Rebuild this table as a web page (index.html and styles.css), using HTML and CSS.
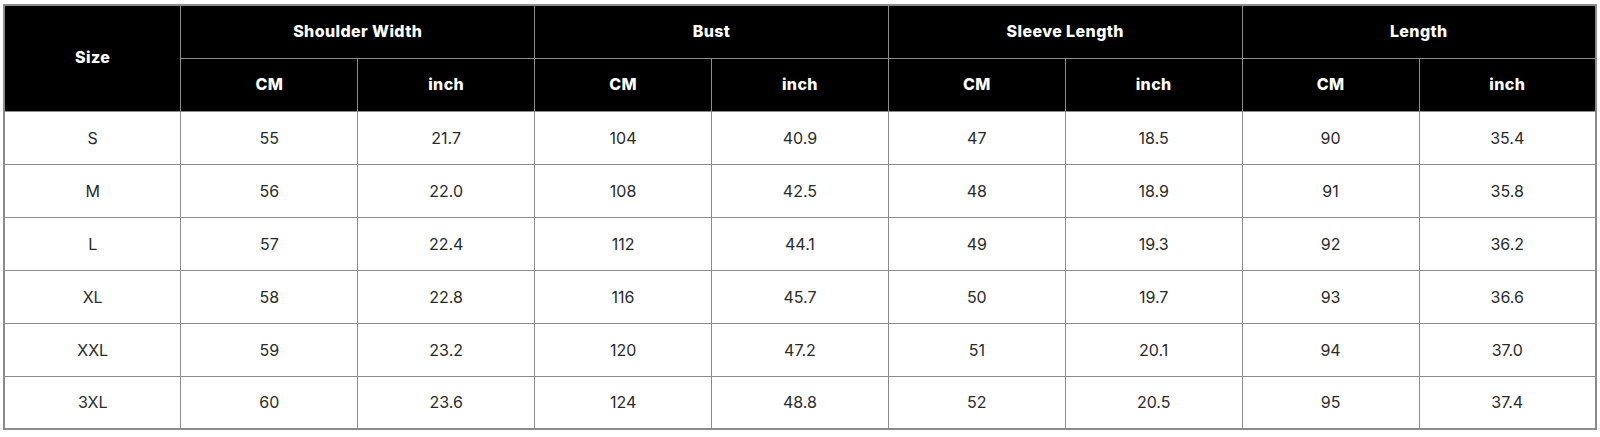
FILE: index.html
```html
<!DOCTYPE html>
<html>
<head>
<meta charset="utf-8">
<link rel="stylesheet" href="styles.css">
</head>
<body>
<table class="size-table">
  <thead>
    <tr>
      <th rowspan="2">Size</th>
      <th colspan="2">Shoulder Width</th>
      <th colspan="2">Bust</th>
      <th colspan="2">Sleeve Length</th>
      <th colspan="2">Length</th>
    </tr>
    <tr>
      <th>CM</th><th>inch</th>
      <th>CM</th><th>inch</th>
      <th>CM</th><th>inch</th>
      <th>CM</th><th>inch</th>
    </tr>
  </thead>
  <tbody>
    <tr><td>S</td><td>55</td><td>21.7</td><td>104</td><td>40.9</td><td>47</td><td>18.5</td><td>90</td><td>35.4</td></tr>
    <tr><td>M</td><td>56</td><td>22.0</td><td>108</td><td>42.5</td><td>48</td><td>18.9</td><td>91</td><td>35.8</td></tr>
    <tr><td>L</td><td>57</td><td>22.4</td><td>112</td><td>44.1</td><td>49</td><td>19.3</td><td>92</td><td>36.2</td></tr>
    <tr><td>XL</td><td>58</td><td>22.8</td><td>116</td><td>45.7</td><td>50</td><td>19.7</td><td>93</td><td>36.6</td></tr>
    <tr><td>XXL</td><td>59</td><td>23.2</td><td>120</td><td>47.2</td><td>51</td><td>20.1</td><td>94</td><td>37.0</td></tr>
    <tr><td>3XL</td><td>60</td><td>23.6</td><td>124</td><td>48.8</td><td>52</td><td>20.5</td><td>95</td><td>37.4</td></tr>
  </tbody>
</table>
</body>
</html>
```

FILE: styles.css
```css
html, body {
  margin: 0;
  padding: 0;
  background: #ffffff;
}

body {
  padding: 4px 3px 0 3px;
  font-family: "Inter", "Open Sans", sans-serif;
}

.size-table {
  width: 1594px;
  border-collapse: collapse;
  table-layout: fixed;
  border: 2px solid #8c8c8c;
}

.size-table th,
.size-table td {
  border: 1px solid #8c8c8c;
  height: 53px;
  padding: 0;
  text-align: center;
  vertical-align: middle;
  box-sizing: border-box;
}

.size-table th {
  background: #000000;
  color: #ffffff;
  font-weight: 800;
  font-size: 16px;
  letter-spacing: 0.4px;
  padding-bottom: 2px;
}

.size-table td {
  color: #2a2a2a;
  font-weight: 400;
  font-size: 16px;
}
```
